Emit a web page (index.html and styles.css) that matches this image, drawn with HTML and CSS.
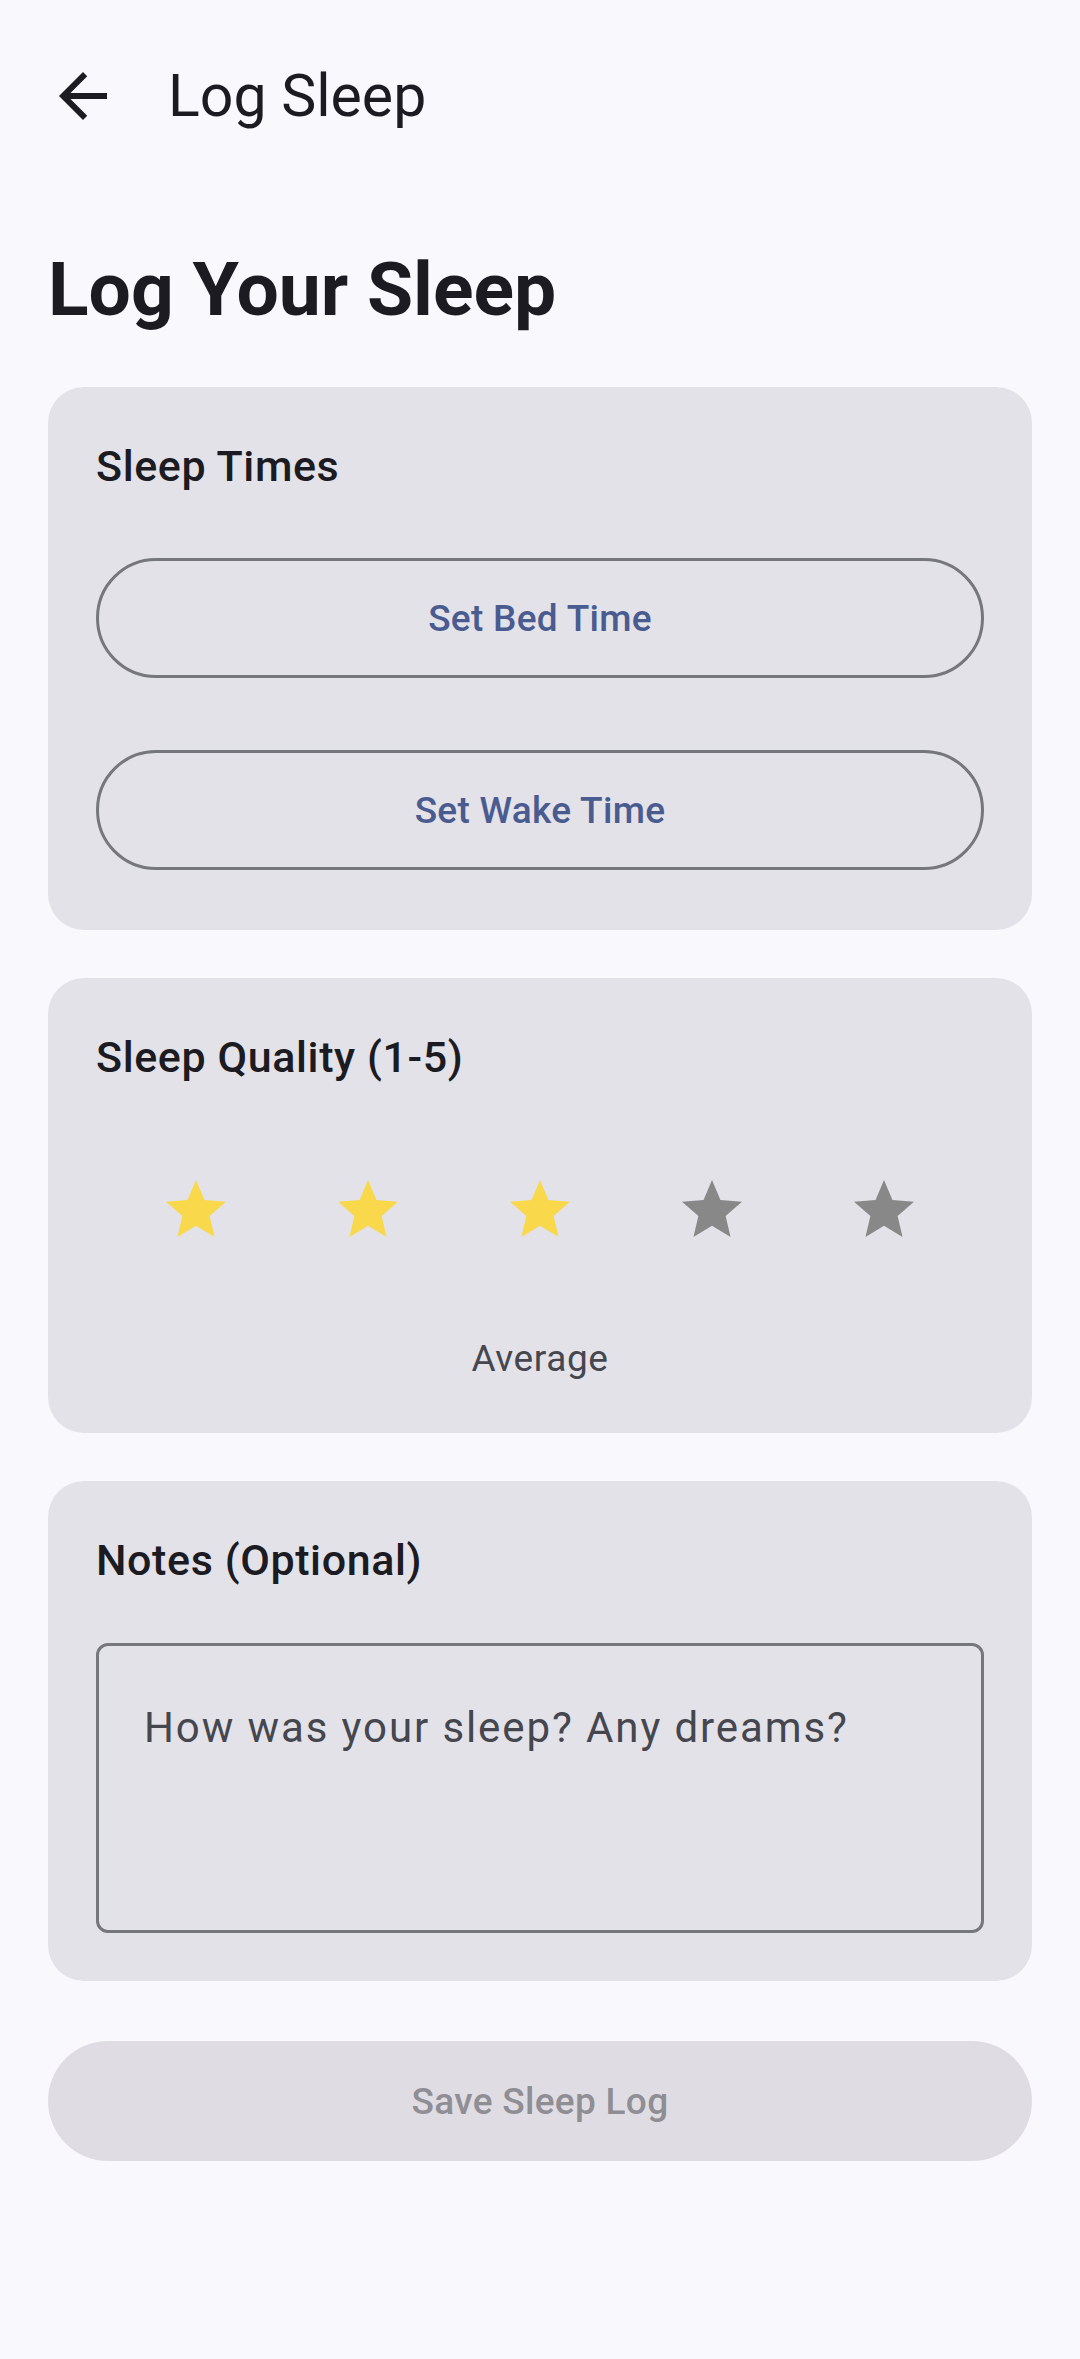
FILE: index.html
```html
<!DOCTYPE html>
<html lang="en">
<head>
<meta charset="utf-8">
<title>Log Sleep</title>
<link rel="stylesheet" href="styles.css">
</head>
<body>
<header class="topbar">
  <button class="nav-btn" aria-label="Back">
    <svg class="nav-icon" viewBox="0 0 24 24" width="72" height="72"><path d="M20 11H7.83l5.59-5.59L12 4l-8 8 8 8 1.41-1.41L7.83 13H20v-2z"/></svg>
  </button>
  <h1 class="topbar-title">Log Sleep</h1>
</header>
<main class="content">
  <h2 class="headline">Log Your Sleep</h2>

  <section class="card">
    <h3 class="card-title">Sleep Times</h3>
    <div class="touch"><button class="outline-btn">Set Bed Time</button></div>
    <div class="touch"><button class="outline-btn">Set Wake Time</button></div>
  </section>

  <section class="card">
    <h3 class="card-title">Sleep Quality (1-5)</h3>
    <div class="stars">
      <span class="star on"><svg viewBox="0 0 24 24" width="72" height="72"><path d="M12 17.27L18.18 21l-1.64-7.03L22 9.24l-7.19-.61L12 2 9.19 8.63 2 9.24l5.46 4.73L5.82 21z"/></svg></span>
      <span class="star on"><svg viewBox="0 0 24 24" width="72" height="72"><path d="M12 17.27L18.18 21l-1.64-7.03L22 9.24l-7.19-.61L12 2 9.19 8.63 2 9.24l5.46 4.73L5.82 21z"/></svg></span>
      <span class="star on"><svg viewBox="0 0 24 24" width="72" height="72"><path d="M12 17.27L18.18 21l-1.64-7.03L22 9.24l-7.19-.61L12 2 9.19 8.63 2 9.24l5.46 4.73L5.82 21z"/></svg></span>
      <span class="star off"><svg viewBox="0 0 24 24" width="72" height="72"><path d="M12 17.27L18.18 21l-1.64-7.03L22 9.24l-7.19-.61L12 2 9.19 8.63 2 9.24l5.46 4.73L5.82 21z"/></svg></span>
      <span class="star off"><svg viewBox="0 0 24 24" width="72" height="72"><path d="M12 17.27L18.18 21l-1.64-7.03L22 9.24l-7.19-.61L12 2 9.19 8.63 2 9.24l5.46 4.73L5.82 21z"/></svg></span>
    </div>
    <p class="quality-label">Average</p>
  </section>

  <section class="card">
    <h3 class="card-title">Notes (Optional)</h3>
    <div class="notes-field"><span class="placeholder">How was your sleep? Any dreams?</span></div>
  </section>

  <div class="touch"><button class="save-btn" disabled>Save Sleep Log</button></div>
</main>
</body>
</html>
```

FILE: styles.css
```css
* { box-sizing: border-box; }
html, body {
  margin: 0;
  padding: 0;
  background: #f9f8fd;
  font-family: Roboto, "Noto Sans", sans-serif;
  color: #1b1b21;
}
.topbar {
  height: 192px;
  display: flex;
  align-items: center;
  padding-left: 47px;
}
.nav-btn {
  border: 0;
  background: none;
  padding: 0;
  width: 72px;
  height: 72px;
  display: flex;
}
.nav-icon { fill: #1b1b21; }
.topbar-title {
  margin: 0 0 0 49px;
  font-size: 59px;
  font-weight: 400;
  line-height: 76px;
  color: #1b1b21;
}
.content {
  padding: 48px 48px 0;
  display: flex;
  flex-direction: column;
  gap: 48px;
}
.headline {
  margin: 0;
  font-size: 75px;
  font-weight: 700;
  line-height: 99px;
  color: #1b1b21;
}
.card {
  background: #e3e2e9;
  border-radius: 36px;
  padding: 48px;
  display: flex;
  flex-direction: column;
  gap: 48px;
}
.card-title {
  margin: 0;
  font-size: 43px;
  font-weight: 500;
  line-height: 63px;
  letter-spacing: 0.6px;
  color: #1b1b21;
}
.touch { padding: 12px 0; }
.outline-btn {
  display: block;
  width: 100%;
  height: 120px;
  border: 3px solid #76777d;
  border-radius: 60px;
  background: transparent;
  font-family: Roboto, sans-serif;
  font-size: 37px;
  font-weight: 500;
  letter-spacing: 0.3px;
  color: #4a5b90;
}
.stars {
  margin-top: 1px;
  height: 144px;
  display: flex;
  justify-content: space-evenly;
}
.star {
  width: 144px;
  height: 144px;
  display: flex;
  align-items: center;
  justify-content: center;
}
.star.on svg { fill: #f9d84b; }
.star.off svg { fill: #888888; }
.quality-label {
  margin: 2px 0 0;
  text-align: center;
  font-size: 37px;
  line-height: 53px;
  letter-spacing: 0.6px;
  color: #45464e;
}
.notes-field {
  margin-top: 3px;
  height: 290px;
  border: 3px solid #76777d;
  border-radius: 12px;
  padding: 50px 45px 0;
}
.placeholder {
  display: block;
  font-size: 42px;
  line-height: 63px;
  letter-spacing: 1.9px;
  color: #45464e;
}
.save-btn {
  display: block;
  width: 100%;
  height: 120px;
  border: 0;
  border-radius: 60px;
  background: #dfdde3;
  font-family: Roboto, sans-serif;
  font-size: 37px;
  font-weight: 500;
  letter-spacing: 0.3px;
  color: #8f8e94;
}
```
